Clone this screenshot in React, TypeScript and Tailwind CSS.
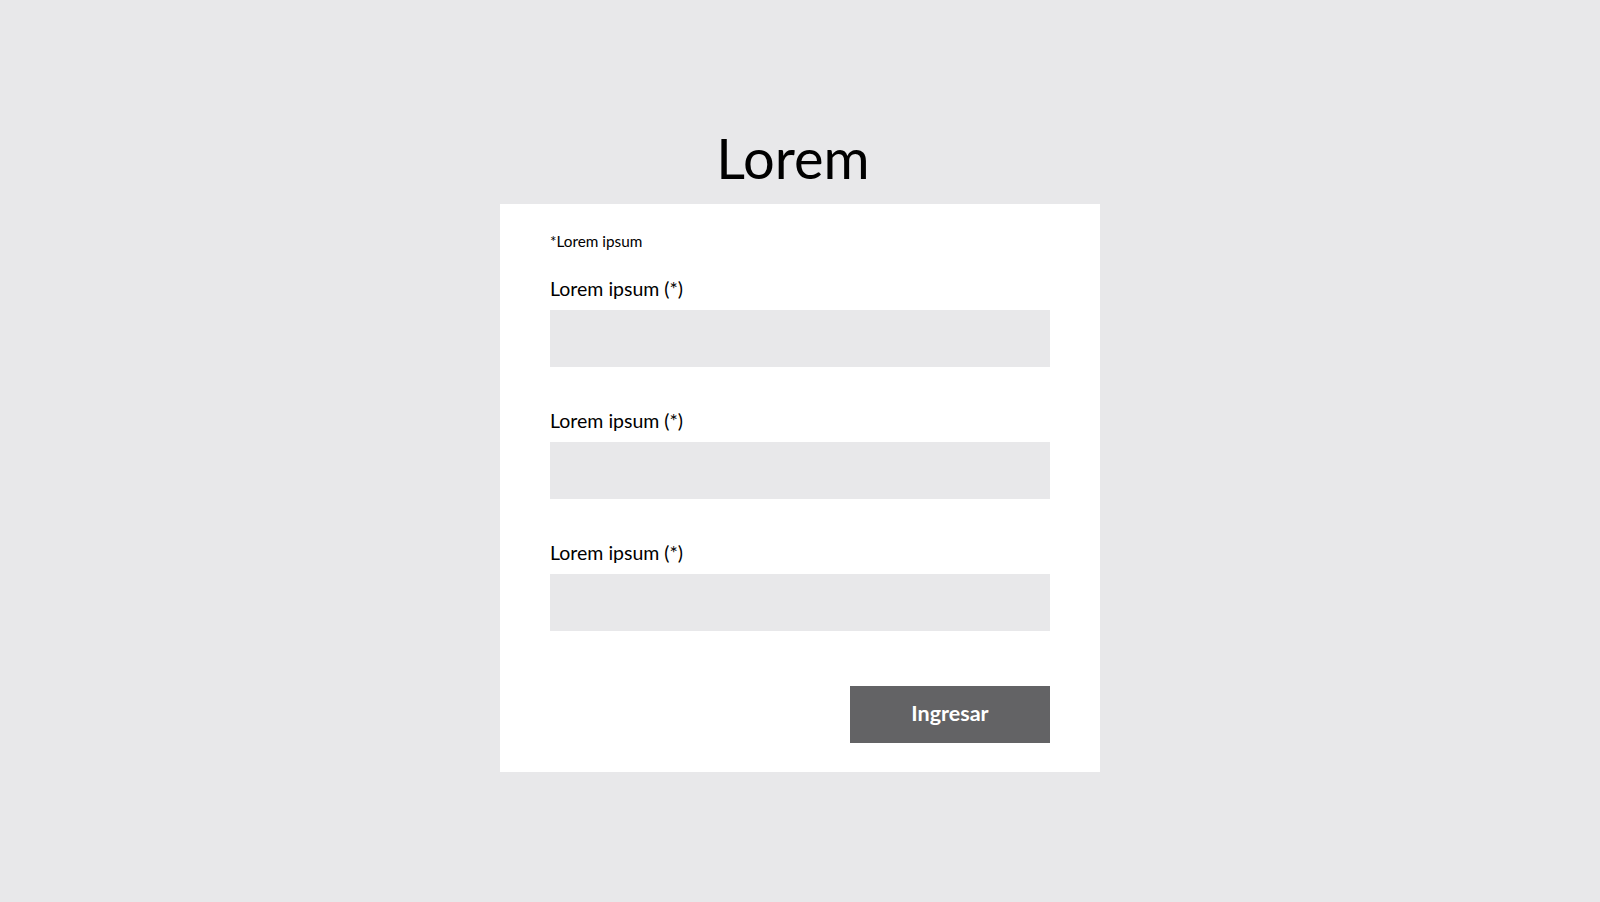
const fields = ["Lorem ipsum (*)", "Lorem ipsum (*)", "Lorem ipsum (*)"];

export default function App() {
  return (
    <div
      className="min-h-[902px] w-full bg-[#e8e8ea] flex flex-col items-center pt-[130px]"
      style={{ fontFamily: "Lato, 'Open Sans', sans-serif" }}
    >
      <h1 className="text-[56px] leading-none text-black mb-[18px] pr-[14px]">Lorem</h1>

      <div className="w-[600px] bg-white px-[50px] pt-[27px] pb-[29px] flex flex-col">
        <p className="text-[15.3px] leading-[20px] text-black">*Lorem ipsum</p>

        <div className="mt-[26px] flex flex-col gap-[42px]">
          {fields.map((label, i) => (
            <div key={i} className="flex flex-col">
              <label className="text-[19.5px] leading-[24px] text-black mb-[9px]">
                {label}
              </label>
              <div className="h-[57px] w-full bg-[#e8e8ea]" />
            </div>
          ))}
        </div>

        <div className="flex justify-end mt-[55px]">
          <button className="w-[200px] h-[57px] bg-[#636365] text-white text-[21.5px] font-bold pb-[3px]">
            Ingresar
          </button>
        </div>
      </div>
    </div>
  );
}
